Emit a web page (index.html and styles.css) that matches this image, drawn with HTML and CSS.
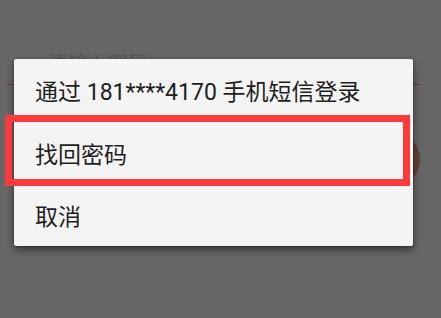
FILE: index.html
```html
<!DOCTYPE html>
<html lang="zh">
<head>
<meta charset="utf-8">
<link rel="stylesheet" href="styles.css">
</head>
<body>
<div class="screen">
  <div class="backdrop">
    <div class="hint">请输入密码</div>
    <div class="underline"></div>
    <div class="circle"></div>
  </div>
  <div class="dialog">
    <div class="item">通过 181****4170 手机短信登录</div>
    <div class="item">找回密码</div>
    <div class="item last">取消</div>
  </div>
  <div class="highlight"></div>
</div>
</body>
</html>
```
FILE: styles.css
```css
html, body {
  margin: 0;
  padding: 0;
  background: #666666;
}
.screen {
  position: relative;
  width: 441px;
  height: 318px;
  overflow: hidden;
  padding-top: 59px;
  padding-left: 14px;
  box-sizing: border-box;
  font-family: Roboto, "Noto Sans CJK SC", sans-serif;
}
.backdrop .hint {
  position: absolute;
  left: 48px;
  top: 52px;
  font-size: 20px;
  line-height: 24px;
  color: #575757;
}
.backdrop .underline {
  position: absolute;
  left: 7px;
  top: 84px;
  width: 413px;
  height: 1px;
  background: #7a2e12;
}
.backdrop .circle {
  position: absolute;
  left: 361px;
  top: 130px;
  width: 59px;
  height: 59px;
  border-radius: 50%;
  background: #5f4135;
}
.dialog {
  position: relative;
  width: 399px;
  height: 187px;
  background: #f4f4f4;
  border-radius: 2px;
  box-shadow: 0 4px 8px rgba(0, 0, 0, 0.45), 0 1px 3px rgba(0, 0, 0, 0.3);
  display: flex;
  flex-direction: column;
}
.item {
  flex: 1;
  display: flex;
  align-items: center;
  padding-left: 21px;
  font-size: 23px;
  color: #1e1e1e;
  border-bottom: 1px solid #dedede;
}
.item.last {
  border-bottom: none;
}
.highlight {
  position: absolute;
  left: 5px;
  top: 115px;
  width: 405px;
  height: 71px;
  box-sizing: border-box;
  border: 7px solid #fd3a3b;
}
```
